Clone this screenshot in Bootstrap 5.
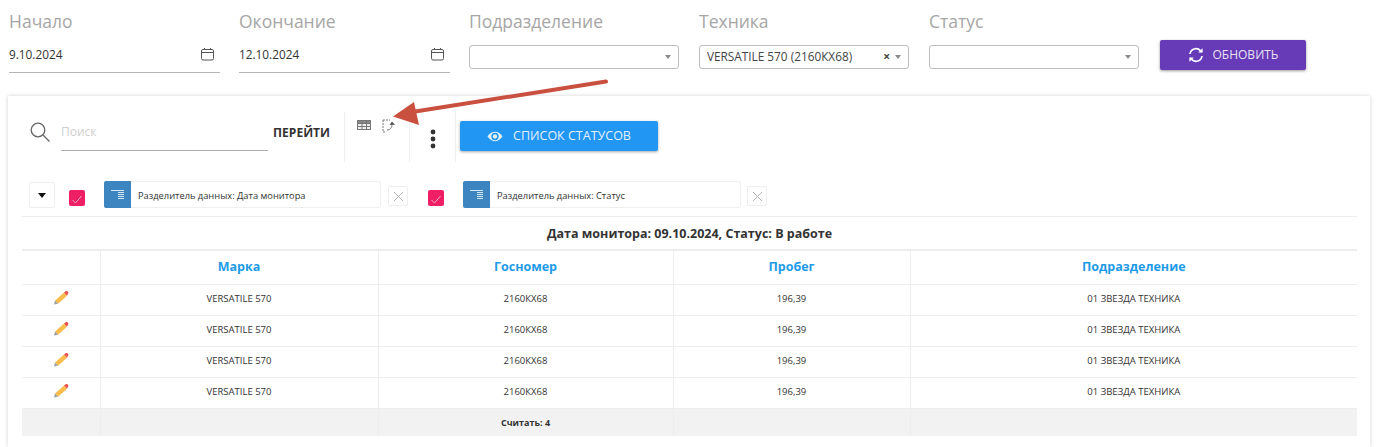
<!DOCTYPE html>
<html lang="ru">
<head>
<meta charset="utf-8">
<title>Монитор</title>
<link href="https://cdn.jsdelivr.net/npm/bootstrap@5.3.0/dist/css/bootstrap.min.css" rel="stylesheet">
<style>
html,body{height:447px;overflow:hidden;background:#fff}
body{font-family:"Open Sans","Noto Sans",sans-serif;color:#333;font-size:12px;position:relative}
.filter-bar{padding:11px 0 0 9px;height:96px;gap:19px}
.filter-item{width:211px}
.filter-label{font-size:17.500px;line-height:20px;color:#a6a6a6;margin-bottom:14px}
.date-field{height:42px;margin-top:-14px;padding:13px 6px 0 0;border-bottom:1px solid #b5b5b5;font-size:11.800px;line-height:20px;color:#333;justify-content:space-between}
.combo{width:210px;height:24px;border:1px solid #bdbdbd;border-radius:3px;padding:0 7px;font-size:11.800px;color:#444;margin-top:2px}
.combo-caret{width:0;height:0;border-left:3px solid transparent;border-right:3px solid transparent;border-top:4px solid #8a8a8a}
.combo-x{font-size:12px;font-weight:700;margin-right:5px;line-height:1}
.refresh-btn{width:146px;height:30px;margin:29px 0 0 1px;background:#673ab7;color:#e9e2f5;border:0;border-radius:2px;font-size:12px;box-shadow:0 1px 3px rgba(0,0,0,.4);gap:9px;font-weight:500}
.panel{margin-left:8px;width:1362px;height:351px;border:0;border-radius:0;box-shadow:0 0 4px rgba(0,0,0,.18);padding:0 13px 0 14px}
.tools{height:85px;padding-top:16px}
.search-icon{margin:10px 0 0 8px}
.search-box{width:207px;height:39px;margin:0 5px 0 11px;border:0;border-bottom:1px solid #adadad;border-radius:0;padding:0;font-size:12px;box-shadow:none;color:#333}
.search-box::placeholder{color:#cfcfcf}
.go-label{font-size:12.100px;font-weight:700;color:#333;margin-top:12px;width:71px}
.tool-cell{height:50px;border-left:1px solid #efefef}
.tool-icons{width:65px;padding:7px 0 0 12px;gap:11px}
.tool-icons svg:first-child{margin-top:1px}
.tool-more{width:46px;padding-top:17px}
.status-btn{width:198px;height:30px;margin:9px 0 0 4px;background:#2196f3;color:#e3f1fd;border:0;border-radius:2px;font-size:12.500px;gap:10px;box-shadow:0 1px 3px rgba(0,0,0,.35);font-weight:500}
.group-bar{height:36px;border-bottom:1px solid #ececec}
.caret-btn{width:26px;height:26px;margin:1px 0 0 7px;border:1px solid #eee;border-radius:2px;background:#fff;padding:0}
.caret-btn span{display:block;width:0;height:0;margin:auto;border-left:4px solid transparent;border-right:4px solid transparent;border-top:5px solid #111}
.tick{width:16px;height:16px;background:#ee1f64;border-radius:2px;margin-top:9px}
.tick-first{margin-left:14px}
.tick-second{margin-left:20px}
.chip{height:27px;margin-left:19px;border:1px solid #efefef;border-radius:2px;font-size:9.300px;color:#333}
.chip-wide{width:277px}
.chip-wider{width:278px}
.chip-text{margin-top:2px}
.chip-icon{width:27px;height:27px;margin:-1px 7px -1px -1px;background:#3d85c0;border-radius:2px 0 0 2px}
.chip-close{width:20px;height:20px;border:1px solid #eee;border-radius:2px;background:#fff;padding:0;margin-top:5px}
.close-first{margin-left:7px}
.close-second{margin-left:6px}
.grid-table{table-layout:fixed;width:1335px;margin:0;font-size:9.500px;--bs-table-border-color:#ededed;color:#333}
.grid-table td,.grid-table th{padding:0;text-align:center;vertical-align:middle;border-width:1px 0 0 1px;border-style:solid;border-color:#ededed}
.grid-table td:first-child,.grid-table th:first-child{border-left:0}
.grid-table .title-row td{height:33px;padding-top:2px;font-size:12.500px;font-weight:700;border-top:0}
.grid-table .head-row th{height:34px;font-size:12.500px;font-weight:700;color:#1e9be8;border-top-width:2px}
.grid-table .data-row td{height:31px}
.grid-table .foot-row td{height:28px;background:#f2f2f2;font-size:9px;font-weight:700}
.col-edit{width:78px}.col-brand{width:278px}.col-plate{width:295px}.col-run{width:237px}.col-unit{width:447px}
.pencil{display:block;margin:-3px auto 0}
.arrow-layer{position:absolute;left:0;top:0;pointer-events:none}
</style>
</head>
<body>
<div class="d-flex filter-bar">
  <div class="filter-item">
    <div class="filter-label">Начало</div>
    <div class="d-flex align-items-start date-field"><span>9.10.2024</span>
      <svg class="mt-1" width="13" height="13" viewBox="0 0 13 13" fill="none" stroke="#555"><rect x=".5" y="1.5" width="12" height="10.5" rx="1.5"/><path d="M.5 4.5h12M3.5 0v2M9.5 0v2"/></svg></div>
  </div>
  <div class="filter-item">
    <div class="filter-label">Окончание</div>
    <div class="d-flex align-items-start date-field"><span>12.10.2024</span>
      <svg class="mt-1" width="13" height="13" viewBox="0 0 13 13" fill="none" stroke="#555"><rect x=".5" y="1.5" width="12" height="10.5" rx="1.5"/><path d="M.5 4.5h12M3.5 0v2M9.5 0v2"/></svg></div>
  </div>
  <div class="filter-item">
    <div class="filter-label">Подразделение</div>
    <div class="d-flex align-items-center combo"><span class="flex-grow-1"></span><i class="combo-caret"></i></div>
  </div>
  <div class="filter-item">
    <div class="filter-label">Техника</div>
    <div class="d-flex align-items-center combo"><span class="flex-grow-1">VERSATILE 570 (2160КХ68)</span><span class="combo-x">×</span><i class="combo-caret"></i></div>
  </div>
  <div class="filter-item">
    <div class="filter-label">Статус</div>
    <div class="d-flex align-items-center combo"><span class="flex-grow-1"></span><i class="combo-caret"></i></div>
  </div>
  <button class="d-flex align-items-center justify-content-center refresh-btn" type="button">
    <svg width="16" height="16" viewBox="0 0 16 16" fill="none" stroke="#fff" stroke-width="1.7"><path d="M2 7a6 6 0 0 1 10.5-3.2L14 5"/><path d="M14 9a6 6 0 0 1-10.5 3.2L2 11"/><path d="M14.6 1.2v4.4h-4.4z" fill="#fff" stroke="none"/><path d="M1.4 14.8v-4.4h4.4z" fill="#fff" stroke="none"/></svg>
    ОБНОВИТЬ
  </button>
</div>

<div class="card panel">
  <div class="d-flex tools">
    <svg class="search-icon" width="20" height="20" viewBox="0 0 20 20" fill="none" stroke="#666" stroke-width="1.3"><circle cx="8" cy="8" r="6.8"/><path d="M13 13l6.500 6.500"/></svg>
    <input class="form-control search-box" type="text" placeholder="Поиск">
    <div class="go-label">ПЕРЕЙТИ</div>
    <div class="d-flex tool-cell tool-icons">
      <svg width="14" height="10" viewBox="0 0 14 10" fill="#eee" stroke="#777"><rect x=".5" y=".5" width="13" height="9"/><path d="M.5.5h13v3H.5z" fill="#888"/><path d="M.5 3.500h13M.5 6.500h13M5 .5v9M9.500 .5v9" fill="none"/></svg>
      <svg width="14" height="14" viewBox="0 0 14 14" fill="none" stroke="#777"><path d="M1 1h7M1 1v12M1 13h3" stroke-dasharray="2 1"/><path d="M5 11c3 0 5-2 5-6"/><path d="M7.500 6L10 2.500l3 3.200z" fill="#555" stroke="none"/></svg>
    </div>
    <div class="d-flex justify-content-center tool-cell tool-more">
      <svg width="6" height="20" viewBox="0 0 6 20" fill="#333"><circle cx="3" cy="3" r="2.400"/><circle cx="3" cy="10" r="2.400"/><circle cx="3" cy="17" r="2.400"/></svg>
    </div>
    <div class="tool-cell"></div>
    <button class="d-flex align-items-center justify-content-center status-btn" type="button">
      <svg width="16" height="11" viewBox="0 0 17 11"><path d="M.5 5.500C3 2 5.600 .5 8.500 .5s5.500 1.500 8 5c-2.500 3.500-5.100 5-8 5s-5.500-1.500-8-5z" fill="#e3f1fd"/><circle cx="8.500" cy="5.500" r="3.900" fill="#2196f3"/><circle cx="8.500" cy="5.500" r="2.300" fill="#e3f1fd"/></svg>
      СПИСОК СТАТУСОВ
    </button>
  </div>

  <div class="d-flex group-bar">
    <button class="caret-btn" type="button"><span></span></button>
    <div class="d-flex justify-content-center tick tick-first">
      <svg width="12" height="12" viewBox="0 0 12 12" class="mt-1" fill="none" stroke="#f8a8c4" stroke-width="1"><path d="M1.500 6l3 3 6-7"/></svg>
    </div>
    <div class="d-flex align-items-center chip chip-wide">
      <span class="d-flex align-items-center justify-content-center chip-icon"><svg width="13" height="9" viewBox="0 0 13 9" stroke="#d5e6f4" fill="none"><path d="M0 .5h13M7 2.500h6M7 4.500h6M7 6.500h6M7 8.500h6"/></svg></span>
      <span class="chip-text">Разделитель данных: Дата монитора</span>
    </div>
    <button class="d-flex align-items-center justify-content-center chip-close close-first" type="button"><svg width="11" height="11" viewBox="0 0 11 11" stroke="#b5b5b5"><path d="M1 1l9 9M10 1l-9 9"/></svg></button>
    <div class="d-flex justify-content-center tick tick-second">
      <svg width="12" height="12" viewBox="0 0 12 12" class="mt-1" fill="none" stroke="#f8a8c4" stroke-width="1"><path d="M1.500 6l3 3 6-7"/></svg>
    </div>
    <div class="d-flex align-items-center chip chip-wider">
      <span class="d-flex align-items-center justify-content-center chip-icon"><svg width="13" height="9" viewBox="0 0 13 9" stroke="#d5e6f4" fill="none"><path d="M0 .5h13M7 2.500h6M7 4.500h6M7 6.500h6M7 8.500h6"/></svg></span>
      <span class="chip-text">Разделитель данных: Статус</span>
    </div>
    <button class="d-flex align-items-center justify-content-center chip-close close-second" type="button"><svg width="11" height="11" viewBox="0 0 11 11" stroke="#b5b5b5"><path d="M1 1l9 9M10 1l-9 9"/></svg></button>
  </div>

  <table class="table grid-table">
    <colgroup><col class="col-edit"><col class="col-brand"><col class="col-plate"><col class="col-run"><col class="col-unit"></colgroup>
    <tbody>
      <tr class="title-row"><td colspan="5">Дата монитора: 09.10.2024, Статус: В работе</td></tr>
      <tr class="head-row"><th></th><th>Марка</th><th>Госномер</th><th>Пробег</th><th>Подразделение</th></tr>
      <tr class="data-row"><td><svg class="pencil" width="16" height="14" viewBox="0 0 16 14"><path d="M2 9.500L11 1.500l3 3.300-9 8z" fill="#f8bd4c"/><path d="M11 1.500l1.200-1a1.800 1.800 0 0 1 2.500 2.700l-.7 1.600z" fill="#ef5350"/><path d="M2 9.500L1 13.500l4-.7z" fill="#9aa0a6"/></svg></td><td>VERSATILE 570</td><td>2160КХ68</td><td>196,39</td><td>01 ЗВЕЗДА ТЕХНИКА</td></tr>
      <tr class="data-row"><td><svg class="pencil" width="16" height="14" viewBox="0 0 16 14"><path d="M2 9.500L11 1.500l3 3.300-9 8z" fill="#f8bd4c"/><path d="M11 1.500l1.200-1a1.800 1.800 0 0 1 2.500 2.700l-.7 1.600z" fill="#ef5350"/><path d="M2 9.500L1 13.500l4-.7z" fill="#9aa0a6"/></svg></td><td>VERSATILE 570</td><td>2160КХ68</td><td>196,39</td><td>01 ЗВЕЗДА ТЕХНИКА</td></tr>
      <tr class="data-row"><td><svg class="pencil" width="16" height="14" viewBox="0 0 16 14"><path d="M2 9.500L11 1.500l3 3.300-9 8z" fill="#f8bd4c"/><path d="M11 1.500l1.200-1a1.800 1.800 0 0 1 2.500 2.700l-.7 1.600z" fill="#ef5350"/><path d="M2 9.500L1 13.500l4-.7z" fill="#9aa0a6"/></svg></td><td>VERSATILE 570</td><td>2160КХ68</td><td>196,39</td><td>01 ЗВЕЗДА ТЕХНИКА</td></tr>
      <tr class="data-row"><td><svg class="pencil" width="16" height="14" viewBox="0 0 16 14"><path d="M2 9.500L11 1.500l3 3.300-9 8z" fill="#f8bd4c"/><path d="M11 1.500l1.200-1a1.800 1.800 0 0 1 2.500 2.700l-.7 1.600z" fill="#ef5350"/><path d="M2 9.500L1 13.500l4-.7z" fill="#9aa0a6"/></svg></td><td>VERSATILE 570</td><td>2160КХ68</td><td>196,39</td><td>01 ЗВЕЗДА ТЕХНИКА</td></tr>
      <tr class="foot-row"><td></td><td></td><td>Считать: 4</td><td></td><td></td></tr>
    </tbody>
  </table>
</div>

<svg class="arrow-layer" width="1392" height="447" viewBox="0 0 1392 447"><path d="M606 81.500L412 112" stroke="#c9503f" stroke-width="4" stroke-linecap="round"/><path d="M393 116.500L414 102l5 23z" fill="#c9503f"/></svg>
<script src="https://cdn.jsdelivr.net/npm/bootstrap@5.3.0/dist/js/bootstrap.bundle.min.js"></script>
</body>
</html>
